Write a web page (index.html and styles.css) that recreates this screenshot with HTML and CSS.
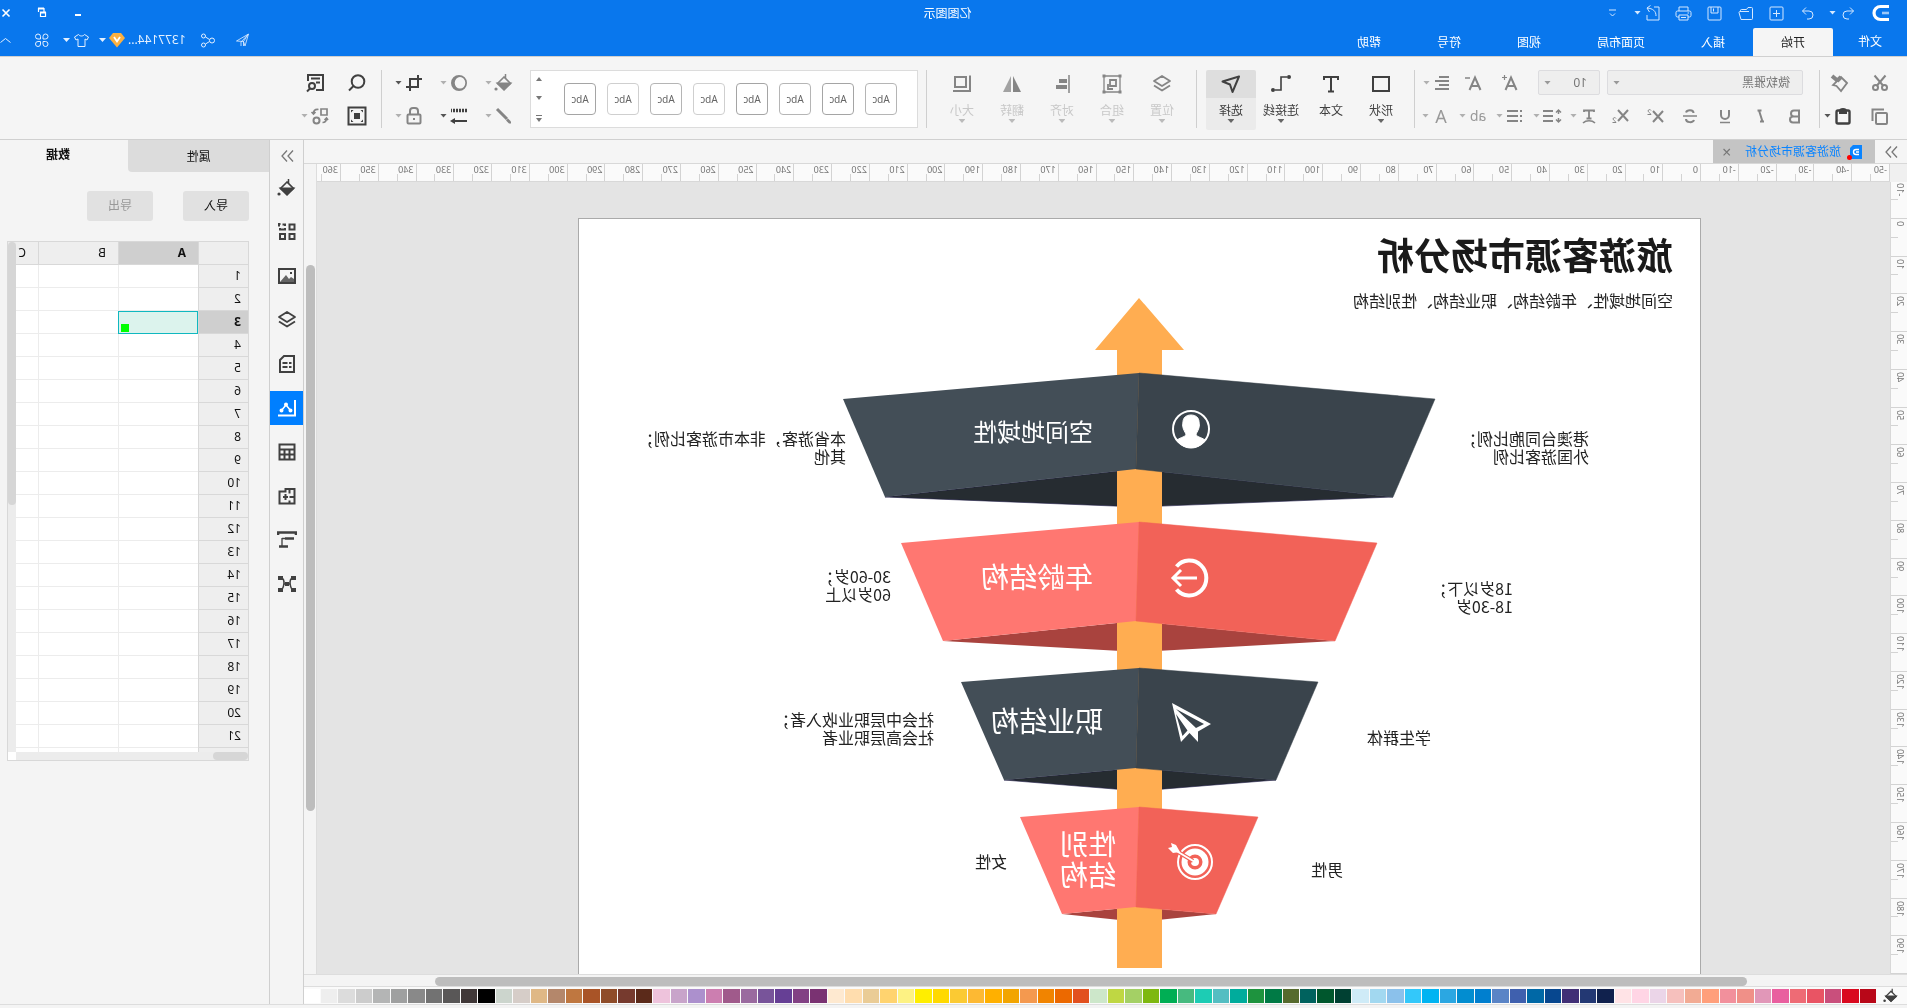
FILE: index.html
```html
<!DOCTYPE html>
<html lang="zh-CN">
<head>
<meta charset="utf-8">
<title>亿图图示</title>
<link rel="stylesheet" href="styles.css">
</head>
<body>
<svg class="sprite" aria-hidden="true">
  <symbol id="i-logo" viewBox="0 0 20 20"><path d="M3 3.500h8.500a6.500 6.500 0 0 1 0 13H3" stroke-width="3.200"/><path d="M3 10h7" stroke-width="2.600" opacity=".6"/></symbol>
  <symbol id="i-undo" viewBox="0 0 20 20"><path d="M8 4.500L4.500 8l3.500 3.500M4.500 8H11a4 4 0 0 1 0 8H9"/></symbol>
  <symbol id="i-redo" viewBox="0 0 20 20"><path d="M12 4.500L15.500 8 12 11.500M15.500 8H9a4 4 0 0 0 0 8h2"/></symbol>
  <symbol id="i-new" viewBox="0 0 20 20"><rect x="4" y="4" width="13" height="13" rx="1"/><path d="M10.500 7v7M7 10.500h7"/></symbol>
  <symbol id="i-open" viewBox="0 0 20 20"><path d="M3.500 7V5.500a1 1 0 0 1 1-1H8l1.500 2h5a1 1 0 0 1 1 1v1M3.500 7l0 8.500a1 1 0 0 0 1 1h10.500L17 9.500a1 1 0 0 0-1-1H7"/></symbol>
  <symbol id="i-save" viewBox="0 0 20 20"><rect x="4" y="4" width="13" height="13" rx="1"/><path d="M7 4v6h7V4M11.500 5.500v3"/></symbol>
  <symbol id="i-print" viewBox="0 0 20 20"><path d="M6 8V4h9v4M6 14H4.500a1.500 1.500 0 0 1-1.500-1.500V9.500A1.500 1.500 0 0 1 4.500 8h12A1.500 1.500 0 0 1 18 9.500v3a1.500 1.500 0 0 1-1.500 1.500H15M6 12h9v5H6zM5 10h1.500M8 14.500h5"/></symbol>
  <symbol id="i-export" viewBox="0 0 20 20"><path d="M9 4H4v13h12v-5M7 13c0-5 3-7.500 9-8M12.500 2.500L16 5l-2.500 4"/></symbol>
  <symbol id="i-more" viewBox="0 0 20 20"><path d="M7 7h7M8 10.500l2.500 2.500 2.500-2.500"/></symbol>
  <symbol id="i-min" viewBox="0 0 20 20"><path d="M7 12h6" stroke-width="2"/></symbol>
  <symbol id="i-restore" viewBox="0 0 20 20"><path d="M13.500 9V5.500h-6M8 5v4M6.500 9.500h5v4h-5z" stroke-width="1.200"/><path d="M6 9.500h6M8 5.500h6" stroke-width="2"/></symbol>
  <symbol id="i-close" viewBox="0 0 20 20"><path d="M6.500 6.500l7 7M13.500 6.500l-7 7" stroke-width="1.600"/></symbol>
  <symbol id="i-send" viewBox="0 0 20 20"><path d="M4.500 4l3.500 12 1.500-4.500L16.500 11zM5 4.500l4.500 7v4.500M5 4.500l7 7.500v4" stroke-width=".8"/></symbol>
  <symbol id="i-share" viewBox="0 0 20 20"><circle cx="6" cy="10.500" r="2.500"/><circle cx="14.500" cy="6" r="2"/><circle cx="14.500" cy="15" r="2"/><path d="M8.500 9.500l4-2.500M8.500 11.500l4 2.500"/></symbol>
  <symbol id="i-vip" viewBox="0 0 16 16"><path d="M4 1h8l4 5-8 9.500L0 6z" fill="#fbb040" stroke="none"/><path d="M5 5l3 4.500L11 5" stroke="#fff" stroke-width="1.800"/></symbol>
  <symbol id="i-shirt" viewBox="0 0 20 20"><path d="M7.500 4.500L3.500 7l1.500 3 2-1v7.500h7V9l2 1 1.500-3-4-2.500c-1.500 2-4.500 2-6 0z"/></symbol>
  <symbol id="i-apps" viewBox="0 0 20 20"><path d="M9 9V6.500A2.500 2.500 0 1 0 6.500 9zM11.500 9V6.500A2.500 2.500 0 1 1 14 9zM9 11.500V14a2.500 2.500 0 1 1-2.500-2.500zM11.500 11.500V14a2.500 2.500 0 1 0 2.500-2.500z"/></symbol>
  <symbol id="i-up" viewBox="0 0 12 20"><path d="M1.500 12.500l5-4 5 4"/></symbol>

  <symbol id="i-cut" viewBox="0 0 20 20"><circle cx="5.500" cy="14.500" r="2.500"/><circle cx="14.500" cy="14.500" r="2.500"/><path d="M7 12.500L15.500 2.500M13 12.500L4.500 2.500"/></symbol>
  <symbol id="i-painter" viewBox="0 0 20 20"><path d="M3 9l6-6 8 8-3.500 1L9 17z" stroke-width="1.800" transform="translate(0 1)"/><path d="M9 4l4 4M12 8l6-5" stroke-width="4"/></symbol>
  <symbol id="i-copy" viewBox="0 0 20 20"><rect x="3" y="7" width="11" height="11" rx="1"/><path d="M6 3.500h11.500V15"/></symbol>
  <symbol id="i-paste" viewBox="0 0 20 20"><path d="M7 4.500H5a1.500 1.500 0 0 0-1.500 1.500v10A1.500 1.500 0 0 0 5 17.500h10a1.500 1.500 0 0 0 1.500-1.500V6A1.500 1.500 0 0 0 15 4.500h-2" stroke-width="2.400"/><path d="M6 5a4 3 0 0 1 8 0v3H6z" fill="currentColor" stroke="none"/></symbol>
  <symbol id="i-grow" viewBox="0 0 20 20"><path d="M4.500 17L10 4.500 15.500 17M6.500 13h7"/><path d="M14 4.500h5M16.500 2v5" stroke-width="1.200"/></symbol>
  <symbol id="i-shrink" viewBox="0 0 20 20"><path d="M3.500 17L9 4.500 14.500 17M5.500 13h7"/><path d="M14 5h5" stroke-width="1.500"/></symbol>
  <symbol id="i-align" viewBox="0 0 20 20"><path d="M3 5h10M3 9h14M3 13h10M3 17h14" transform="translate(0 -1)"/></symbol>
  <symbol id="i-bold" viewBox="0 0 20 20"><path d="M6 4.500h5a3 3 0 0 1 0 6H6zM6 10.500h6a3 3 0 0 1 0 6H6z"/></symbol>
  <symbol id="i-italic" viewBox="0 0 20 20"><path d="M8.500 4.500h4M6 15.500h4M11 4.500L7.500 15.500"/></symbol>
  <symbol id="i-under" viewBox="0 0 20 20"><path d="M6 4v5a4 4 0 0 0 8 0V4"/><path d="M5 16.500h10" stroke-width="1.500"/></symbol>
  <symbol id="i-strike" viewBox="0 0 20 20"><path d="M14 6.500C13 3.500 6.500 3.500 6.500 7M14 13c0 4-7 4-8 1"/><path d="M3 10h14" stroke-width="1.500"/></symbol>
  <symbol id="i-sup" viewBox="0 0 20 20"><path d="M2 5l10 11M12 5L2 16"/><path d="M14 4.500c.5-1.500 3-1 3 .5 0 1-2.500 2-3 3.500h3.500" stroke-width="1"/></symbol>
  <symbol id="i-sub" viewBox="0 0 20 20"><path d="M2 4l10 11M12 4L2 15"/><path d="M14 12.500c.5-1.500 3-1 3 .5 0 1-2.500 2-3 3.500h3.500" stroke-width="1"/></symbol>
  <symbol id="i-arc" viewBox="0 0 20 20"><path d="M5 6V4.500h10V6M10 4.500V12M7.500 12.500h5" stroke-width="1.800"/><path d="M4 17c3-3 9-3 12 0" stroke-width="1.600"/></symbol>
  <symbol id="i-spacing" viewBox="0 0 20 20"><path d="M9 5h10M9 10h10M9 15h10"/><path d="M3.500 5v3M3.500 12v3M1 6.500l2.500-2.500 2.500 2.500M1 13.500l2.500 2.500 2.500-2.500" stroke-width="1.500"/></symbol>
  <symbol id="i-bullets" viewBox="0 0 20 20"><path d="M7 5h11M7 10h11M7 15h11M3 5h2M3 10h2M3 15h2"/></symbol>
  <symbol id="i-rect" viewBox="0 0 20 20"><rect x="2" y="3" width="16" height="14"/></symbol>
  <symbol id="i-text" viewBox="0 0 20 20"><path d="M3 6V3h14v3M10 3v14M7 17.500h6"/></symbol>
  <symbol id="i-conn" viewBox="0 0 20 20"><path d="M4 3h6v13h6" stroke-width="1.600"/><circle cx="2" cy="3" r="2" fill="currentColor" stroke="none"/><circle cx="18" cy="16" r="2" fill="currentColor" stroke="none"/></symbol>
  <symbol id="i-select" viewBox="0 0 20 20"><path d="M2 2.500L18.500 7.500 11 10.500 8.500 18z" stroke-linejoin="round"/></symbol>
  <symbol id="i-layers" viewBox="0 0 20 20"><path d="M10 2l8 5-8 5-8-5zM2 11.500l8 5 8-5" stroke-linejoin="round" stroke-width="1.800"/></symbol>
  <symbol id="i-group" viewBox="0 0 20 20"><path d="M2 2h16v16H2z" stroke-width="1.300"/><path d="M6 6h6v6H6zM14 10v5H9" stroke-width="1.800"/><path d="M.5 .5h3v3h-3zM16.500 .5h3v3h-3zM.5 16.500h3v3h-3zM16.500 16.500h3v3h-3z" fill="currentColor" stroke="none"/></symbol>
  <symbol id="i-obj" viewBox="0 0 20 20"><path d="M3 1v18" stroke-width="1.500"/><path d="M5 7h8M5 13h11" stroke-width="4"/></symbol>
  <symbol id="i-flip" viewBox="0 0 20 20"><path d="M9 2v16H1z" fill="currentColor" stroke="none"/><path d="M11 2v16h8z" fill="currentColor" stroke="none" opacity=".75"/></symbol>
  <symbol id="i-size" viewBox="0 0 20 20"><path d="M2 1.500V17h17"/><path d="M6 3h11v10H6z"/></symbol>
  <symbol id="i-fill" viewBox="0 0 20 20"><path d="M10 4l6.500 6.500-6.500 6-6.500-6z" stroke-width="1.600"/><path d="M4 10.500h12l-6 6z" fill="currentColor"/><path d="M8.500 1v4.500" stroke-width="1.500"/><circle cx="18" cy="16" r="1.600" fill="currentColor" stroke="none"/></symbol>
  <symbol id="i-brush" viewBox="0 0 20 20"><path d="M17 3L7 13" stroke-width="3"/><path d="M6 12.500l2 2-3 3H3v-2z" fill="currentColor" stroke="none"/></symbol>
  <symbol id="i-ring" viewBox="0 0 20 20"><path fill-rule="evenodd" d="M10 2a8 8 0 1 0 0 16 8 8 0 0 0 0-16zm-1 2a5.300 5.800 0 1 1 0 11.600 5.300 5.800 0 0 1 0-11.600z" fill="currentColor" stroke="none"/></symbol>
  <symbol id="i-crop" viewBox="0 0 20 20"><path d="M6 2v12h8M2 6h12v12M14 14h4"/></symbol>
  <symbol id="i-line" viewBox="0 0 20 20"><path d="M2 4.500h16" stroke-width="3.500" stroke-dasharray="2 1"/><path d="M2 15h14"/><path d="M14 12l5 3-5 3z" fill="currentColor" stroke="none"/></symbol>
  <symbol id="i-lock" viewBox="0 0 20 20"><rect x="3.500" y="8.500" width="13" height="9" rx="1"/><path d="M6 8V5a3 3 0 0 1 3-3h2a3 3 0 0 1 3 3v3M9 13h2"/></symbol>
  <symbol id="i-find" viewBox="0 0 20 20"><circle cx="9" cy="8.500" r="6.300"/><path d="M13.500 13l4.500 4.500"/></symbol>
  <symbol id="i-docfind" viewBox="0 0 20 20"><path d="M9 17H2V2h15v6M5 5.500h9M5 9.500h4"/><circle cx="13" cy="13" r="3"/><path d="M15 15.500l3 3"/></symbol>
  <symbol id="i-fit" viewBox="0 0 20 20"><path d="M1.500 1.500h17v17h-17z"/><path d="M7 7h6v6H7zM4 4h2.500L4 6.500zM16 4h-2.500L16 6.500zM4 16h2.500L4 13.500zM16 16h-2.500l2.500-2.500z" fill="currentColor" stroke="none"/></symbol>
  <symbol id="i-swap" viewBox="0 0 20 20"><path d="M3 3h6v6H3zM11.500 3.500c4-.5 5 1.500 5 4M14.500 6l2 2 2-2M3.500 12c0 3 1 4.500 4 4.500M2 14l1.500-2 2 2" stroke-width="1.700"/><circle cx="13.500" cy="14.500" r="3"/></symbol>

  <symbol id="i-chev2" viewBox="0 0 20 20"><path d="M4 4.500l5 5.500-5 5.500M10 4.500l5 5.500-5 5.500" stroke-width="1.300"/></symbol>
  <symbol id="i-grid4" viewBox="0 0 20 20"><path d="M2.500 2.500h5v5h-5zM2.500 12h5v5h-5zM12 12h5v5h-5zM12 6v1.500h5V6M12 4V2.500h2.500M16.500 2h1.500v2.500"/></symbol>
  <symbol id="i-image" viewBox="0 0 20 20"><path d="M2 3h16v14H2z"/><path d="M3 16v-3l3-2 2 2 3-4 6 7z" fill="currentColor" stroke="none" opacity=".8"/><path d="M5 7h2"/></symbol>
  <symbol id="i-doc" viewBox="0 0 20 20"><path d="M3 2h10l4 4v12H3zM5.500 9H8M9.500 9h5M5.500 13H8M9.500 13h5"/></symbol>
  <symbol id="i-chart" viewBox="0 0 20 20"><path d="M2 2v15.500h17"/><path d="M6 13l5-6 5 6" stroke-width="1.500"/><path d="M11 4.500a2 2 0 1 1 0 4 2 2 0 0 1 0-4zM6.500 10.500a2 2 0 1 1 0 4 2 2 0 0 1 0-4zM15.500 10.500a2 2 0 1 1 0 4 2 2 0 0 1 0-4z" fill="currentColor" stroke="none"/></symbol>
  <symbol id="i-table" viewBox="0 0 20 20"><path d="M2.500 2.500h15v15h-15zM2.500 7.500h15M2.500 12.500h15M7.500 7.500v10M12.500 7.500v10"/></symbol>
  <symbol id="i-plan" viewBox="0 0 20 20"><path d="M2.500 3h9v2.500h6V17.500h-15zM2.500 11h5M7.500 3v4.500M11.500 8v6M9 11h5M7.500 14.500v3"/></symbol>
  <symbol id="i-gantt" viewBox="0 0 20 20"><path d="M1 5V2.500h18V5M3 8.500h9M9 16.500h9" stroke-width="2.600"/><path d="M15 8v8M12 8.500h3" stroke-width="1.300"/></symbol>
  <symbol id="i-mind" viewBox="0 0 20 20"><path d="M4 4c5 0 3 12-1 12M16 4c-5 0-3 12 1 12M7 10h6" stroke-width="1.500"/><path d="M1 2h5v4H1zM14 2h5v4h-5zM1 14h5v4H1zM14 14h5v4h-5zM8 8h4v4H8z" fill="currentColor" stroke="none"/></symbol>
</svg>

<div class="app">
  <header class="top">
    <div class="titlebar">
      <div class="quick">
        <svg class="ic logo"><use href="#i-logo"/></svg>
        <button class="drop" aria-label="撤销"><svg class="ic"><use href="#i-undo"/></svg><i class="caret"></i></button>
        <button aria-label="重做"><svg class="ic"><use href="#i-redo"/></svg></button>
        <button aria-label="新建"><svg class="ic"><use href="#i-new"/></svg></button>
        <button aria-label="打开"><svg class="ic"><use href="#i-open"/></svg></button>
        <button aria-label="保存"><svg class="ic"><use href="#i-save"/></svg></button>
        <button aria-label="打印"><svg class="ic"><use href="#i-print"/></svg></button>
        <button class="drop" aria-label="导出"><svg class="ic"><use href="#i-export"/></svg><i class="caret"></i></button>
        <button aria-label="更多"><svg class="ic"><use href="#i-more"/></svg></button>
      </div>
      <div class="apptitle">亿图图示</div>
      <div class="winbtns">
        <button aria-label="最小化"><svg class="ic"><use href="#i-min"/></svg></button>
        <button aria-label="还原"><svg class="ic"><use href="#i-restore"/></svg></button>
        <button aria-label="关闭"><svg class="ic"><use href="#i-close"/></svg></button>
      </div>
    </div>
    <div class="menubar">
      <nav class="tabs">
        <button class="file">文件</button>
        <button class="on">开始</button>
        <button>插入</button>
        <button>页面布局</button>
        <button>视图</button>
        <button>符号</button>
        <button>帮助</button>
      </nav>
      <div class="account">
        <button aria-label="发送"><svg class="ic"><use href="#i-send"/></svg></button>
        <button aria-label="分享"><svg class="ic"><use href="#i-share"/></svg></button>
        <button class="user"><span>1377144...</span><svg class="ic vip"><use href="#i-vip"/></svg><i class="caret"></i></button>
        <button class="drop" aria-label="皮肤"><svg class="ic"><use href="#i-shirt"/></svg><i class="caret"></i></button>
        <button class="apps" aria-label="应用"><svg class="ic"><use href="#i-apps"/></svg></button>
        <button class="fold" aria-label="收起"><svg class="ic narrow"><use href="#i-up"/></svg></button>
      </div>
    </div>
  </header>

  <section class="ribbon">
    <div class="group clip">
      <div class="row"><button aria-label="剪切"><svg class="ic"><use href="#i-cut"/></svg></button><button aria-label="格式刷"><svg class="ic"><use href="#i-painter"/></svg></button></div>
      <div class="row second"><button aria-label="复制"><svg class="ic"><use href="#i-copy"/></svg></button><button class="drop dark" aria-label="粘贴"><svg class="ic"><use href="#i-paste"/></svg><i class="caret"></i></button></div>
    </div>
    <div class="group font">
      <div class="row">
        <label class="pick family"><select aria-label="字体"><option>微软雅黑</option></select><i class="caret"></i></label>
        <label class="pick size"><select aria-label="字号"><option>10</option></select><i class="caret"></i></label>
        <div class="grow">
          <button aria-label="增大字号"><svg class="ic"><use href="#i-grow"/></svg></button>
          <button aria-label="减小字号"><svg class="ic"><use href="#i-shrink"/></svg></button>
        </div>
        <button class="drop" aria-label="对齐方式"><svg class="ic"><use href="#i-align"/></svg><i class="caret"></i></button>
      </div>
      <div class="row">
        <div class="styles">
          <button aria-label="粗体"><svg class="ic"><use href="#i-bold"/></svg></button>
          <button aria-label="斜体"><svg class="ic"><use href="#i-italic"/></svg></button>
          <button aria-label="下划线"><svg class="ic"><use href="#i-under"/></svg></button>
          <button aria-label="删除线"><svg class="ic"><use href="#i-strike"/></svg></button>
          <button aria-label="上标"><svg class="ic"><use href="#i-sup"/></svg></button>
          <button aria-label="下标"><svg class="ic"><use href="#i-sub"/></svg></button>
        </div>
        <div class="styles drops">
          <button class="drop" aria-label="文字方向"><svg class="ic"><use href="#i-arc"/></svg><i class="caret"></i></button>
          <button class="drop" aria-label="行距"><svg class="ic"><use href="#i-spacing"/></svg><i class="caret"></i></button>
          <button class="drop" aria-label="项目符号"><svg class="ic"><use href="#i-bullets"/></svg><i class="caret"></i></button>
          <button class="drop glyph"><span>ab</span><i class="caret"></i></button>
          <button class="drop glyph"><span class="big">A</span><i class="caret"></i></button>
        </div>
      </div>
    </div>
    <div class="group tools dark">
      <button><svg class="ic"><use href="#i-rect"/></svg><span>形状</span><i class="caret"></i></button>
      <button><svg class="ic"><use href="#i-text"/></svg><span>文本</span></button>
      <button><svg class="ic"><use href="#i-conn"/></svg><span>连接线</span><i class="caret"></i></button>
      <button class="on"><svg class="ic"><use href="#i-select"/></svg><span>选择</span><i class="caret"></i></button>
    </div>
    <div class="group tools off">
      <button><svg class="ic"><use href="#i-layers"/></svg><span>位置</span><i class="caret"></i></button>
      <button><svg class="ic"><use href="#i-group"/></svg><span>组合</span><i class="caret"></i></button>
      <button><svg class="ic"><use href="#i-obj"/></svg><span>对齐</span><i class="caret"></i></button>
      <button><svg class="ic"><use href="#i-flip"/></svg><span>翻转</span><i class="caret"></i></button>
      <button><svg class="ic"><use href="#i-size"/></svg><span>大小</span><i class="caret"></i></button>
    </div>
    <div class="gallery">
      <div class="cards">
        <button class="mid">Abc</button><button>Abc</button><button class="mid">Abc</button><button>Abc</button>
        <button class="pale">Abc</button><button class="mid">Abc</button><button class="pale">Abc</button><button>Abc</button>
      </div>
      <div class="spin">
        <button aria-label="上一行"><i class="caret upward"></i></button>
        <button aria-label="下一行"><i class="caret"></i></button>
        <button class="expand" aria-label="展开"><i class="caret"></i></button>
      </div>
    </div>
    <div class="group paint">
      <div class="row">
        <button class="drop" aria-label="填充"><svg class="ic"><use href="#i-fill"/></svg><i class="caret"></i></button>
        <button class="drop" aria-label="阴影"><svg class="ic"><use href="#i-ring"/></svg><i class="caret"></i></button>
        <button class="drop dark" aria-label="裁剪"><svg class="ic"><use href="#i-crop"/></svg><i class="caret"></i></button>
      </div>
      <div class="row">
        <button class="drop" aria-label="线条颜色"><svg class="ic"><use href="#i-brush"/></svg><i class="caret"></i></button>
        <button class="drop dark" aria-label="线条样式"><svg class="ic"><use href="#i-line"/></svg><i class="caret"></i></button>
        <button class="drop" aria-label="锁定"><svg class="ic"><use href="#i-lock"/></svg><i class="caret"></i></button>
      </div>
    </div>
    <div class="group find">
      <div class="row dark"><button aria-label="查找"><svg class="ic"><use href="#i-find"/></svg></button><button aria-label="页面查找"><svg class="ic"><use href="#i-docfind"/></svg></button></div>
      <div class="row second"><button class="dark" aria-label="适合窗口"><svg class="ic"><use href="#i-fit"/></svg></button><button class="drop" aria-label="替换"><svg class="ic"><use href="#i-swap"/></svg><i class="caret"></i></button></div>
    </div>
  </section>

  <div class="main">
    <section class="editor">
      <div class="docs">
        <button class="chev" aria-label="展开侧栏"><svg class="ic"><use href="#i-chev2"/></svg></button>
        <div class="doc">
          <span class="docicon"><svg viewBox="0 0 12 14"><path d="M0 0h9l3 3v11H0z" fill="#0a84ff"/><path d="M3 4.500h3a2.500 2.500 0 0 1 0 5H3M3 7h3" fill="none" stroke="#fff" stroke-width="1.400"/></svg></span>
          <span class="docname">旅游客源市场分析</span>
          <button aria-label="关闭文档">×</button>
        </div>
      </div>
      <div class="stage">
        <div class="corner"></div>
        <div class="hruler"><ol id="hruler"></ol></div>
        <div class="vruler"><ol id="vruler"></ol></div>
        <div class="canvas">
          <div class="page">
            <svg class="diagram" width="1122" height="794" viewBox="0 0 1122 794">
              <g fill="#262c31" stroke="#201c48" stroke-width=".6"><path d="M308 279L565 251 816 279 562 289z"/><path d="M425 562L565 550 697 562 562 573z"/></g>
              <g fill="#a9433e"><path d="M366 423L565 403 758 423 562 434z"/><path d="M485 696L565 689 639 696 562 704z"/></g>
              <path d="M562 80L606 132H584V750H539V132H517z" fill="#ffad51"/>
              <g fill="#434e57"><path d="M562 155L858 181 816 279 565 251z"/><path d="M562 450L740 464 697 562 565 550z"/></g>
              <g fill="#3a444c" stroke="#3a444c" stroke-width=".5"><path d="M266 181L562 155 565 251 308 279z"/><path d="M383 464L562 450 565 550 425 562z"/></g>
              <g fill="#ff7771"><path d="M562 304L800 325 758 423 565 403z"/><path d="M562 589L681 599 639 696 565 689z"/></g>
              <g fill="#f26258" stroke="#f26258" stroke-width=".5"><path d="M324 325L562 304 565 403 366 423z"/><path d="M443 599L562 589 565 689 485 696z"/></g>
              <g fill="none" stroke="#fff">
                <circle cx="510" cy="211" r="18" stroke-width="2"/>
                <path d="M496 222c4-3 9-3 9-6-3-5-4-8-3-12 0-4 3-7 8-7s8 3 8 7c1 4 0 7-3 12 0 3 5 3 9 6-4 6-9 8-14 8s-10-2-14-8z" fill="#fff"/>
                <path d="M524.500 348.500A17 17.500 0 1 0 524.500 371.500" stroke-width="4"/>
                <path d="M504 360h23M520 352l8 8-8 8" stroke-width="3"/>
                <circle cx="506" cy="644" r="17" stroke-width="2"/>
                <circle cx="506" cy="644" r="10.500" stroke-width="6"/>
                <circle cx="506" cy="644" r="4" fill="#fff" stroke="none"/>
                <path d="M508 643L526 632" stroke="#f26258" stroke-width="4"/>
                <path d="M506 644L528 631" stroke-width="2"/>
                <path d="M521 634l4-7 5-2-1 4 4 1-5 5z" fill="#fff" stroke="none"/>
              </g>
              <path d="M529 485L520 524 511.500 515 503 524V513.500L490 506z" fill="#fff"/>
              <path d="M525 491L497 506 505 510zM525 496L518.500 518 513.500 512.500z" fill="#3a444c"/>
              <g class="cap">
                <text x="608" y="223" class="c24">空间地域性</text>
                <text x="608" y="370">年龄结构</text>
                <text x="598" y="514">职业结构</text>
                <text x="585" y="637">性别</text><text x="585" y="668">结构</text>
              </g>
              <text class="heading" x="28" y="52">旅游客源市场分析</text>
              <g class="note">
                <text x="28" y="89">空间地域性、年龄结构、职业结构、性别结构</text>
                <text x="112" y="227">港澳台同胞比例；</text><text x="112" y="245">外国游客比例</text>
                <text x="188" y="377">18岁以下；</text><text x="188" y="395">18-30岁</text>
                <text x="270" y="526">学生群体</text>
                <text x="358" y="658">男性</text>
                <text x="855" y="227">本省游客，非本市游客比例；</text><text x="855" y="245">其他</text>
                <text x="810" y="365">30-60岁；</text><text x="810" y="383">60岁以上</text>
                <text x="767" y="508">社会中层职业收入者；</text><text x="767" y="526">社会高层职业者</text>
                <text x="694" y="650">女性</text>
              </g>
            </svg>
          </div>
        </div>
        <div class="vscroll"><div class="thumb"></div></div>
        <div class="hscroll"><div class="thumb"></div></div>
      </div>
      <div class="palette">
        <button class="bucket" aria-label="填充颜色"><svg class="ic"><use href="#i-fill"/></svg></button>
        <div class="swatches" id="swatches"></div>
      </div>
    </section>

    <aside class="strip">
      <button class="chev" aria-label="收起面板"><svg class="ic"><use href="#i-chev2"/></svg></button>
      <button aria-label="填充"><svg class="ic"><use href="#i-fill"/></svg></button>
      <button aria-label="符号库"><svg class="ic"><use href="#i-grid4"/></svg></button>
      <button aria-label="图片"><svg class="ic"><use href="#i-image"/></svg></button>
      <button aria-label="图层"><svg class="ic"><use href="#i-layers"/></svg></button>
      <button aria-label="页面"><svg class="ic"><use href="#i-doc"/></svg></button>
      <button class="on" aria-label="图表"><svg class="ic"><use href="#i-chart"/></svg></button>
      <button aria-label="表格"><svg class="ic"><use href="#i-table"/></svg></button>
      <button aria-label="平面图"><svg class="ic"><use href="#i-plan"/></svg></button>
      <button aria-label="甘特图"><svg class="ic"><use href="#i-gantt"/></svg></button>
      <button aria-label="思维导图"><svg class="ic"><use href="#i-mind"/></svg></button>
    </aside>

    <aside class="panel">
      <div class="ptabs"><button class="back">属性</button><button class="front">数据</button></div>
      <div class="io"><button>导入</button><button disabled>导出</button></div>
      <div class="sheet">
        <div class="cells">
          <table>
            <colgroup><col class="cn"><col class="cc"><col class="cc"><col class="cc"></colgroup>
            <thead><tr><th></th><th class="sel">A</th><th>B</th><th>C</th></tr></thead>
            <tbody id="rows"></tbody>
          </table>
        </div>
        <div class="sv"><div class="thumb"></div></div>
        <div class="sh"><div class="thumb"></div></div>
        <div class="se"></div>
      </div>
    </aside>
  </div>
  <footer class="foot"></footer>
</div>
<script src="app.js"></script>
</body>
</html>
```
FILE: styles.css
```css
* { box-sizing: border-box; }
body { margin: 0; overflow: hidden; background: #f4f4f4; font: 12px/16px "Noto Sans", "Noto Sans CJK SC", sans-serif; color: #333; }
button { margin: 0; padding: 0; border: 0; background: none; font: inherit; color: inherit; display: flex; align-items: center; justify-content: center; }
ol { margin: 0; padding: 0; list-style: none; }
.sprite { display: none; }
.ic { width: 20px; height: 20px; flex: none; fill: none; stroke: currentColor; stroke-width: 2; display: block; }
.caret { flex: none; width: 7px; height: 4px; background: currentColor; clip-path: polygon(0 0, 100% 0, 50% 100%); }
.upward { clip-path: polygon(50% 0, 100% 100%, 0 100%); }
.drop { gap: 2px; }
.dark { color: #404040; }

/* The whole window is shown flipped left to right. */
.app { display: flex; flex-direction: column; height: 100vh; transform: scaleX(-1); }

/* Title and menu */
.top { background: #0977ed; color: #fff; }
.top .ic { stroke-width: 1; }
.titlebar { display: grid; grid-template-columns: 1fr auto 1fr; align-items: center; height: 28px; padding-bottom: 3px; }
.quick { display: flex; align-items: center; gap: 11px; padding-left: 15px; color: #d5e8ff; }
.quick .logo { margin-right: 3px; color: #fff; }
.apptitle { padding: 2px 0 0 12px; }
.winbtns { display: flex; justify-content: flex-end; gap: 16px; overflow: hidden; }
.winbtns button:last-child { margin-right: -4px; }
.menubar { display: flex; justify-content: space-between; height: 28px; }
.tabs { display: flex; }
.tabs button { padding: 2px 28px 0; }
.tabs .file { width: 74px; padding: 0; }
.tabs .on { background: #f5f5f5; color: #222; border-radius: 2px 2px 0 0; }
.account { display: flex; align-items: center; padding-bottom: 4px; color: #e4f0ff; }
.account .user { gap: 3px; margin: 0 7px 0 12px; }
.account button:first-child { margin-right: 15px; }
.account .apps { margin: 0 20px 0 11px; }
.account .vip { width: 16px; height: 16px; }
.narrow { width: 12px; }

/* Ribbon */
.ribbon { display: flex; align-items: flex-start; height: 84px; padding-top: 13px; background: #f5f5f5; border-top: 1px solid #d0d0d0; border-bottom: 1px solid #d0d0d0; color: #858585; }
.group { flex: none; height: 58px; border-right: 1px solid #cfcfcf; }
.row { display: flex; align-items: center; height: 25px; }
.row + .row { margin-top: 8px; }
.row .caret { color: #b0b0b0; }
.row .dark .caret { color: #555; }
.clip { width: 88px; padding-left: 17px; }
.clip .row { gap: 20px; }
.clip .second, .find .second { gap: 17px; }
.font { padding: 0 7px 0 14px; }
.pick { position: relative; display: flex; align-items: center; height: 25px; }
.pick select { width: 100%; height: 25px; padding: 0 12px; border: 1px solid #dcdcdf; border-radius: 2px; background: #eee; color: #777; font: inherit; appearance: none; }
.pick .caret { position: absolute; right: 6px; color: #999; }
.family { width: 196px; margin: 0 7px 0 2px; }
.size { width: 62px; }
.grow { display: flex; gap: 17px; margin: 0 12px 0 17px; }
.styles { display: flex; gap: 15px; }
.drops { gap: 8px; margin-left: 11px; }
.glyph span { width: 20px; font-size: 14px; color: #999; text-align: center; }
.glyph .big { font-size: 18px; }
.tools { display: flex; padding: 0 9px 0 8px; }
.tools button { flex-direction: column; justify-content: flex-start; width: 50px; height: 60px; padding-top: 4px; }
.tools span { margin-top: 10px; line-height: 14px; white-space: nowrap; }
.tools .caret { margin-top: 1px; color: #666; }
.tools .on { border-radius: 2px; background: linear-gradient(#dedede 28px, #ebebeb 28px); }
.off span { color: #c8c8c8; }
.tools.off .caret { color: #bbb; }
.off { padding: 0 10px 0 9px; }
.gallery { display: flex; justify-content: space-between; flex: none; width: 388px; height: 58px; margin-left: 8px; padding: 0 5px 0 20px; border: 1px solid #dcdcdc; background: #fff; }
.cards { display: flex; align-items: center; gap: 11px; }
.cards button { width: 32px; height: 32px; border: 1px solid #a5a5a5; border-radius: 4px; font-size: 10px; color: #666; }
.cards .mid { border-color: #b5b5b5; }
.cards .pale { border-color: #cfcfcf; }
.spin { display: flex; flex-direction: column; justify-content: space-between; padding: 6px 0 5px; color: #777; }
.spin .caret { width: 6px; }
.spin .expand { padding-top: 2px; border-top: 1px solid #777; }
.paint { padding: 0 13px 0 16px; }
.paint .row { gap: 16px; }
.find { padding-left: 14px; border: 0; }
.find .row:first-child { gap: 22px; }

/* Work area */
.main { display: flex; flex: 1; min-height: 0; }
.editor { display: flex; flex-direction: column; flex: 1; min-width: 0; }
.docs { display: flex; height: 24px; border-bottom: 1px solid #d8d8d8; background: #f5f5f5; }
.chev { width: 32px; color: #777; }
.doc { display: flex; align-items: center; width: 162px; padding: 1px 9px 0 13px; background: #c4c4c4; color: #0a84ff; }
.docicon { position: relative; width: 12px; height: 14px; margin-right: 9px; }
.docicon svg { display: block; width: 12px; height: 14px; }
.docicon::after { content: ""; position: absolute; right: -3px; bottom: -1px; width: 5px; height: 5px; border-radius: 50%; background: #f00; }
.docname { flex: 1; }
.doc button { color: #777; font-size: 16px; }
.stage { display: grid; grid-template: 18px 1fr 13px / 17px 1fr 13px; flex: 1; min-height: 0; }
.corner { background: #f0f0f0; }
.hruler { overflow: hidden; border-bottom: 1px solid #d8d8d8; background: #fafafa; }
.hruler ol { display: flex; width: 1587px; height: 17px; }
.hruler li { flex: 1; padding-left: 2px; border-left: 1px solid #d3d3d3; background: linear-gradient(#d3d3d3, #d3d3d3) 50% 100% / 1px 7px no-repeat; }
.hruler li, .vruler li { color: #777; font-size: 9px; line-height: 12px; }
.vruler { overflow: hidden; border-right: 1px solid #d8d8d8; background: #fafafa; }
.vruler ol { display: flex; flex-direction: column; height: 831px; margin-top: -2px; }
.vruler li { display: flex; flex: 1; padding: 2px 0 0 1px; border-top: 1px solid #d3d3d3; background: linear-gradient(#d3d3d3, #d3d3d3) 100% 50% / 7px 1px no-repeat; }
.vruler span { align-self: flex-start; writing-mode: vertical-rl; transform: rotate(180deg); }
.canvas { overflow: hidden; padding: 36px 0 0 189px; background: #e4e4e4; }
.page { width: 1123px; height: 794px; border: 1px solid #aaa; background: #fff; }
.diagram { display: block; margin: -1px; font-family: "Noto Sans CJK SC", sans-serif; }
.cap { fill: #fff; font-size: 28px; }
.cap .c24 { font-size: 24px; }
.heading { fill: #1a1a1a; font-size: 37px; font-weight: 700; }
.note { fill: #222; font-size: 16px; }
.vscroll { grid-area: 1 / 3 / 3 / 4; padding: 101px 2px 0 1px; border-left: 1px solid #ddd; }
.thumb { border-radius: 5px; background: #bdbdbd; }
.vscroll .thumb { height: 546px; }
.hscroll { grid-area: 3 / 1 / 4 / 4; padding: 2px 131px 1px 160px; border: solid #ddd; border-width: 1px 0; background: #f4f4f4; }
.hscroll .thumb { height: 9px; }
.palette { display: flex; height: 17px; padding: 2px 0 1px; background: #fafafa; }
.bucket { width: 31px; color: #404040; }
.bucket .ic { width: 16px; height: 16px; }
.swatches { display: flex; flex: 1; gap: 1px; }
.swatches i { flex: 1; }
.foot { height: 4px; border-top: 1px solid #ddd; background: #f4f4f4; }

/* Tool strip */
.strip { display: flex; flex-direction: column; gap: 10px; width: 35px; border: solid #cfcfcf; border-width: 0 1px; color: #404040; }
.strip button { flex: none; width: 33px; height: 34px; }
.strip .ic { margin-right: 1px; }
.strip .chev { height: 31px; margin-bottom: -10px; }
.strip .on { background: #007fff; color: #fff; }

/* Data panel */
.panel { width: 269px; }
.ptabs { display: grid; grid-template-columns: 141px 1fr; height: 32px; color: #111; }
.ptabs .back { padding-top: 2px; background: #dcdcdc; border-radius: 0 0 4px 0; }
.ptabs .front { padding: 0 0 2px 12px; font-weight: 700; }
.io { display: flex; gap: 30px; padding: 19px 20px 20px; }
.io button { width: 66px; height: 30px; border-radius: 3px; background: #e1e1e1; color: #111; }
.io button:disabled { color: #999; }
.sheet { display: grid; grid-template: 510px 8px / 1fr 8px; width: 242px; margin-left: 20px; border: 1px solid #d8d8d8; background: #ececec; }
.cells { overflow: hidden; background: #fff; }
table { width: 289px; table-layout: fixed; border-collapse: separate; border-spacing: 0; color: #111; }
.cn { width: 50px; }
.cc { width: 80px; }
th, td { height: 23px; padding: 0; border: solid #ececec; border-width: 0 1px 1px 0; text-align: left; font-weight: 400; }
th { padding-left: 12px; border-color: #d8d8d8; background: #eee; }
tbody th { padding-left: 7px; }
.sel { background: #cfcfcf; font-weight: 700; }
.cur { border: 1px solid #10b8c0; background: linear-gradient(#0f0, #0f0) calc(100% - 2px) calc(100% - 1px) / 8px 8px no-repeat #dcf3ed; }
.sheet .thumb { border-radius: 4px; background: #d6d6d6; }
.sv .thumb { height: 263px; }
.sh .thumb { width: 35px; height: 8px; }
.se { background: #fff; }
```
FILE: app.js
```js
const fill = (id, html) => { document.getElementById(id).innerHTML = html; };
const range = (from, to, step) => {
  const out = [];
  for (let n = from; n <= to; n += step) out.push(n);
  return out;
};

fill("hruler", range(-50, 360, 10).map(n => `<li>${n}</li>`).join(""));
fill("vruler", range(-10, 200, 10).map(n => `<li><span>${n < 200 ? n : ""}</span></li>`).join(""));

const colors = ("b80718 d9091f c94f7c e95464 ee6b75 e95f9f e197b8 f09088 f2909c ff9f7b f2ab94 f6c0bd ebd5e8 ffd5e5 ffe3e6 " +
  "10214d 233873 412f76 07478f 0068a6 3f60ae 5a84c6 007fcf 028dd0 2ba7e2 00b4f2 33c8fa 8bc1eb a2d8f0 cfebf7 " +
  "004032 00572d 00625e 566a2d 007a45 1e933e 00ac9c 54bec2 1dccb4 47ba7f 00ae54 7eb810 a4d065 bfd743 cde7ca " +
  "e2501f ec6900 f18400 f4994f f2a500 ffb000 fdb933 fbca33 ffd900 ffee00 fdf283 ffd36f eacc96 ffddae fee9d0 " +
  "7a3272 824184 663f95 78549a 9a6a9f a05a8b cc7eb0 ac90cd c8a4ca eec3dc 5b2a1a 763a2e 8f4c29 a95427 bf7740 " +
  "b4876b dfb886 d6cdc8 ccd5cd 000000 403838 595757 727272 898989 9fa0a0 b4b5b5 cccccc dcdcdc eeeeee ffffff").split(" ");
fill("swatches", colors.map(c => `<i style="background:#${c}"></i>`).join(""));

// The last row is only a sliver at the sheet's lower edge, so it carries no number.
fill("rows", range(1, 22, 1).map(n => n === 3
  ? `<tr><th class="sel">3</th><td class="cur"></td><td></td><td></td></tr>`
  : `<tr><th>${n < 22 ? n : ""}</th><td></td><td></td><td></td></tr>`).join(""));
```
